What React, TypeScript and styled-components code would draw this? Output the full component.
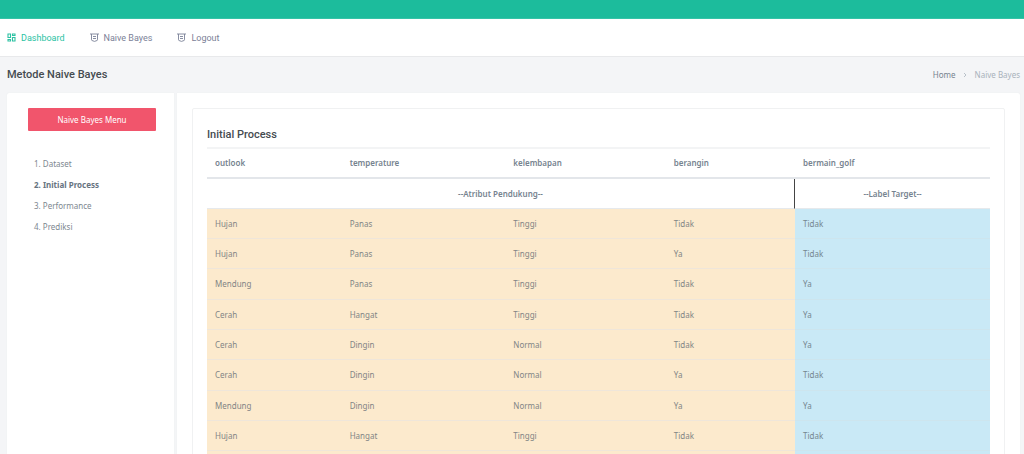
import React from "react";
import styled, { createGlobalStyle } from "styled-components";

const GlobalStyle = createGlobalStyle`
  *, *::before, *::after { box-sizing: border-box; }
  body {
    margin: 0;
    background: #f4f5f7;
    color: #76838f;
    font-family: "Noto Sans", sans-serif;
    font-size: 8px;
    line-height: 12px;
  }
  a { color: inherit; text-decoration: none; }
`;

const TopBar = styled.header`
  height: 19px;
  background: #1cbc9c;
  border-bottom: 1px solid #35c3a7;
`;

const Nav = styled.nav`
  display: flex;
  align-items: center;
  gap: 25px;
  height: 38px;
  padding: 0 7px;
  background: #fff;
  border-bottom: 1px solid #e8e9eb;
`;

const NavLink = styled.a<{ $active?: boolean }>`
  && { color: ${(p) => (p.$active ? "#2cc2a3" : "#7b8197")}; }
  display: flex;
  align-items: center;
  gap: 5px;
  font-family: Roboto, sans-serif;
  font-size: 9px;
  line-height: 12px;
`;

const Icon = styled.svg`
  width: 9px;
  height: 9px;
  flex: none;
`;

const Heading = styled.div`
  display: flex;
  align-items: center;
  justify-content: space-between;
  height: 36px;
  padding: 0 4px 0 7px;
`;

const Title = styled.h1`
  margin: 0;
  color: #454b50;
  font: 500 11px/14px Roboto, sans-serif;
`;

const Breadcrumb = styled.nav`
  display: flex;
  align-items: center;
  gap: 7px;
  color: #a9b2bb;
  font-size: 8px;
`;

const HomeLink = styled.a`
  && { color: #76838f; }
`;

const Chevron = styled.svg`
  width: 5px;
  height: 6px;
`;

const Columns = styled.div`
  display: flex;
  gap: 3px;
  padding: 0 4px 0 7px;
`;

const Sidebar = styled.aside`
  flex: 0 0 167px;
  padding: 15px 18px 15px 21px;
  background: #fff;
  border-radius: 2px 0 0 0;
  box-shadow: 0 0 1px #dfe3e6;
`;

const MenuButton = styled.button`
  display: block;
  width: 100%;
  height: 23px;
  padding: 0;
  border: 0;
  border-radius: 1px;
  background: #f1556c;
  color: #fff;
  font: inherit;
  text-align: center;
`;

const MenuList = styled.ul`
  display: flex;
  flex-direction: column;
  gap: 9px;
  margin: 0;
  padding: 27px 6px 0;
  list-style: none;
`;

const MenuLink = styled.a<{ $current?: boolean }>`
  display: block;
  font-weight: ${(p) => (p.$current ? 700 : 400)};
  && { color: ${(p) => (p.$current ? "#66737f" : "#7d8790")}; }
`;

const Main = styled.main`
  flex: 1;
  min-width: 0;
  padding: 15px;
  background: #fff;
  border-radius: 0 2px 0 0;
  box-shadow: 0 0 1px #dfe3e6;
`;

const Card = styled.section`
  padding: 19px 14px 14px;
  border: 1px solid #f0f1f2;
  border-radius: 2px;
`;

const CardTitle = styled.h2`
  margin: 0 0 5px;
  color: #454b50;
  font: 500 11px/14px Roboto, sans-serif;
`;

const Table = styled.table`
  width: 100%;
  table-layout: fixed;
  border-collapse: separate;
  border-spacing: 0;
  text-align: left;
`;

const Col = styled.col<{ $share: number }>`
  width: ${(p) => p.$share}%;
`;

const HeadCell = styled.th`
  height: 32px;
  padding: 0 8px;
  border-top: 2px solid #f3f4f5;
  border-bottom: 2px solid #e3e6ea;
  font-weight: 600;
`;

const GroupCell = styled.th<{ $divided?: boolean }>`
  height: 30px;
  padding: 0 8px;
  border-bottom: 1px solid #e6e9ec;
  border-right: ${(p) => (p.$divided ? "1px solid #444" : "0")};
  font-weight: 600;
  text-align: center;
`;

const DataCell = styled.td<{ $target?: boolean }>`
  height: 30px;
  padding: 0 8px;
  border-bottom: 1px solid ${(p) => (p.$target ? "#cde5ee" : "#efe6da")};
  background: ${(p) => (p.$target ? "#c9e9f6" : "#fceacd")};
  color: ${(p) => (p.$target ? "#75868f" : "#828585")};
  vertical-align: middle;
  tr:nth-child(3n) > & { height: 31px; }
`;

const DashboardIcon = () => (
  <Icon viewBox="0 0 18 18" fill="none" stroke="currentColor" strokeWidth="2.2" aria-hidden="true">
    <path d="M2 2h5v7H2zM2 13h5v3H2zM11 2h5v3h-5zM11 9h5v7h-5z" />
  </Icon>
);

const BadgeIcon = () => (
  <Icon viewBox="0 0 18 18" fill="none" stroke="currentColor" strokeWidth="1.8" aria-hidden="true">
    <path d="M0 2h18M3 2v11.500q0 1.200 1 1.500l5 1.800 5-1.800q1-.3 1-1.500V2M6 7h6M6 11h6" />
  </Icon>
);

const menu = ["Dataset", "Initial Process", "Performance", "Prediksi"];
const columns = [
  { name: "outlook", share: 17.2 },
  { name: "temperature", share: 20.9 },
  { name: "kelembapan", share: 20.5 },
  { name: "berangin", share: 16.5 },
  { name: "bermain_golf", share: 24.9 },
];
const rows = [
  ["Hujan", "Panas", "Tinggi", "Tidak", "Tidak"],
  ["Hujan", "Panas", "Tinggi", "Ya", "Tidak"],
  ["Mendung", "Panas", "Tinggi", "Tidak", "Ya"],
  ["Cerah", "Hangat", "Tinggi", "Tidak", "Ya"],
  ["Cerah", "Dingin", "Normal", "Tidak", "Ya"],
  ["Cerah", "Dingin", "Normal", "Ya", "Tidak"],
  ["Mendung", "Dingin", "Normal", "Ya", "Ya"],
  ["Hujan", "Hangat", "Tinggi", "Tidak", "Tidak"],
  ["Hujan", "Dingin", "Normal", "Tidak", "Ya"],
];

export default function App() {
  return (
    <>
      <GlobalStyle />
      <TopBar />
      <Nav>
        <NavLink href="#dashboard" $active><DashboardIcon />Dashboard</NavLink>
        <NavLink href="#naive-bayes"><BadgeIcon />Naive Bayes</NavLink>
        <NavLink href="#logout"><BadgeIcon />Logout</NavLink>
      </Nav>
      <Heading>
        <Title>Metode Naive Bayes</Title>
        <Breadcrumb aria-label="Breadcrumb">
          <HomeLink href="#home">Home</HomeLink>
          <Chevron viewBox="0 0 5 6" fill="none" stroke="#b9c1c9" aria-hidden="true">
            <path d="M1 1l2 2-2 2" />
          </Chevron>
          <span>Naive Bayes</span>
        </Breadcrumb>
      </Heading>
      <Columns>
        <Sidebar>
          <MenuButton type="button">Naive Bayes Menu</MenuButton>
          <MenuList>
            {menu.map((label, i) => (
              <li key={label}>
                <MenuLink href={`#step-${i + 1}`} $current={i === 1}>{`${i + 1}. ${label}`}</MenuLink>
              </li>
            ))}
          </MenuList>
        </Sidebar>
        <Main>
          <Card>
            <CardTitle>Initial Process</CardTitle>
            <Table>
              <colgroup>
                {columns.map((c) => <Col key={c.name} $share={c.share} />)}
              </colgroup>
              <thead>
                <tr>{columns.map((c) => <HeadCell key={c.name} scope="col">{c.name}</HeadCell>)}</tr>
                <tr>
                  <GroupCell colSpan={4} $divided>--Atribut Pendukung--</GroupCell>
                  <GroupCell>--Label Target--</GroupCell>
                </tr>
              </thead>
              <tbody>
                {rows.map((row, r) => (
                  <tr key={r}>
                    {row.map((value, c) => <DataCell key={c} $target={c === 4}>{value}</DataCell>)}
                  </tr>
                ))}
              </tbody>
            </Table>
          </Card>
        </Main>
      </Columns>
    </>
  );
}
